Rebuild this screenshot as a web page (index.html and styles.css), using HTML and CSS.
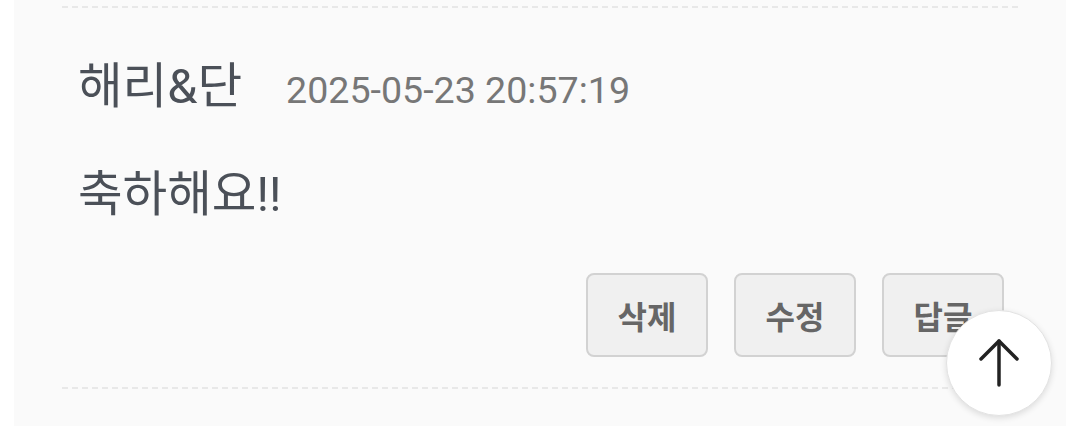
FILE: index.html
```html
<!DOCTYPE html>
<html lang="ko">
<head>
  <meta charset="UTF-8" />
  <meta name="viewport" content="width=device-width, initial-scale=1" />
  <title>댓글</title>
  <link rel="stylesheet" href="styles.css">
</head>
<body>
  <section class="comments">
    <div class="comment-prev"></div>

    <div class="comment">
      <div class="comment-head">
        <span class="comment-name">해리&amp;단</span>
        <span class="comment-date">2025-05-23 20:57:19</span>
      </div>
      <p class="comment-body">축하해요!!</p>
      <div class="comment-actions">
        <button class="btn">삭제</button>
        <button class="btn">수정</button>
        <button class="btn">답글</button>
      </div>
    </div>
  </section>

  <button class="to-top" aria-label="맨 위로">
    <svg width="48" height="48" viewBox="0 0 48 48" fill="none" stroke="#222" stroke-width="3.5" stroke-linecap="round" stroke-linejoin="round">
      <path d="M24 46 V2" />
      <path d="M6 20 L24 2 L42 20" />
    </svg>
  </button>
</body>
</html>
```

FILE: styles.css
```css
body {
  margin: 0;
  padding: 0;
  background: #fff;
  font-family: 'Roboto', 'Noto Sans CJK KR', sans-serif;
  overflow: hidden;
}

.comments {
  margin-left: 14px;
  width: 1052px;
  height: 426px;
  background: #fafafa;
  padding: 0 48px;
  box-sizing: border-box;
}

.comment-prev {
  height: 6px;
  border-bottom: 2px dashed #e8e8e8;
}

.comment {
  padding: 47px 0 30px 16px;
  border-bottom: 2px dashed #e8e8e8;
}

.comment-head {
  display: flex;
  align-items: baseline;
  gap: 44px;
  height: 60px;
  line-height: 64px;
}

.comment-name {
  font-size: 48.5px;
  color: #4b5058;
}

.comment-date {
  font-size: 37.6px;
  color: #777;
}

.comment-body {
  margin: 50px 0 0;
  font-size: 48.5px;
  line-height: 60px;
  color: #4b5058;
}

.comment-actions {
  display: flex;
  justify-content: flex-end;
  gap: 26px;
  margin-top: 48px;
  padding-right: 14px;
}

.btn {
  width: 122px;
  height: 84px;
  border: 2px solid #d2d2d2;
  border-radius: 8px;
  background: #f0f0f0;
  font-family: 'Roboto', 'Noto Sans CJK KR', sans-serif;
  font-size: 32px;
  font-weight: 700;
  color: #666;
  padding: 0;
}

/* 맨 위로 버튼 */
.to-top {
  position: fixed;
  right: 28px;
  bottom: 10px;
  width: 106px;
  height: 106px;
  border-radius: 50%;
  border: 1px solid #e2e2e2;
  background: #fff;
  box-shadow: 0 2px 6px rgba(0, 0, 0, 0.12);
  display: flex;
  align-items: center;
  justify-content: center;
  padding: 0;
}
```
